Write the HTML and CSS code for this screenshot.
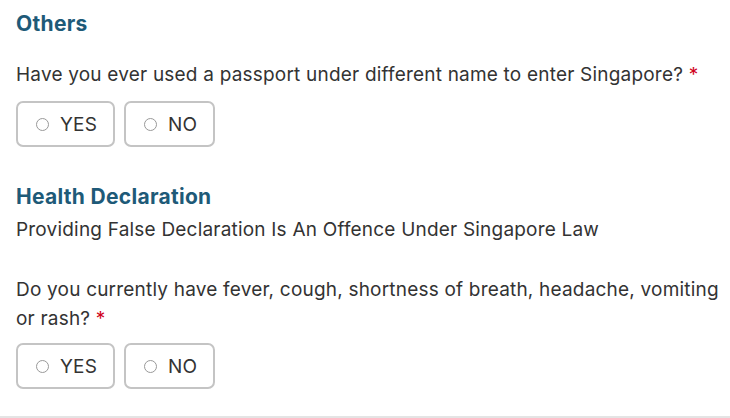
FILE: index.html
```html
<!DOCTYPE html>
<html lang="en">
  <head>
    <meta charset="UTF-8" />
    <meta name="viewport" content="width=device-width, initial-scale=1.0" />
    <title>Declaration</title>
    <link rel="stylesheet" href="styles.css">
  </head>
  <body>
    <div class="form">
      <section class="group">
        <h3 class="group-title">Others</h3>
        <div class="question">
          <p class="label">Have you ever used a passport under different name to enter Singapore? <span class="req">*</span></p>
          <div class="choices">
            <label class="choice"><span class="dot"></span>YES</label>
            <label class="choice"><span class="dot"></span>NO</label>
          </div>
        </div>
      </section>
      <section class="group">
        <h3 class="group-title">Health Declaration</h3>
        <p class="note">Providing False Declaration Is An Offence Under Singapore Law</p>
        <div class="question">
          <p class="label">Do you currently have fever, cough, shortness of breath, headache, vomiting or rash? <span class="req">*</span></p>
          <div class="choices">
            <label class="choice"><span class="dot"></span>YES</label>
            <label class="choice"><span class="dot"></span>NO</label>
          </div>
        </div>
      </section>
    </div>
  </body>
</html>
```

FILE: styles.css
```css
html {
  box-sizing: border-box;
  font-family: Inter, "Noto Sans", Arial, sans-serif;
  color: #333;
  background-color: #fff;
  font-size: 19px;
  letter-spacing: 0.2px;
}
body {
  margin: 0;
  background: white;
}
.form {
  padding: 0 6px 27px 16px;
  border-bottom: 2px solid #e4e4e4;
}
.group-title {
  margin: 0;
  padding-top: 11px;
  font-size: 21px;
  line-height: 26px;
  font-weight: 700;
  letter-spacing: 0.3px;
  color: #1e5a78;
}
.label {
  margin: 0;
  padding-top: 23px;
  line-height: 29px;
}
.req {
  color: #d0021b;
}
.choices {
  display: flex;
  gap: 9px;
  margin-top: 12px;
}
.choice {
  display: flex;
  align-items: center;
  gap: 11px;
  height: 46px;
  box-sizing: border-box;
  padding: 0 16px 0 18px;
  border: 2px solid #c4c4c4;
  border-radius: 7px;
  cursor: pointer;
}
.dot {
  width: 13px;
  height: 13px;
  box-sizing: border-box;
  border: 1.5px solid #999;
  border-radius: 50%;
}
.group + .group {
  margin-top: 37px;
}
.group + .group .group-title {
  padding-top: 0;
}
.note {
  margin: 0;
  padding-top: 8px;
  line-height: 24px;
}
.group + .group .label {
  padding-top: 33px;
}
.group + .group .choices {
  margin-top: 10px;
}
```
